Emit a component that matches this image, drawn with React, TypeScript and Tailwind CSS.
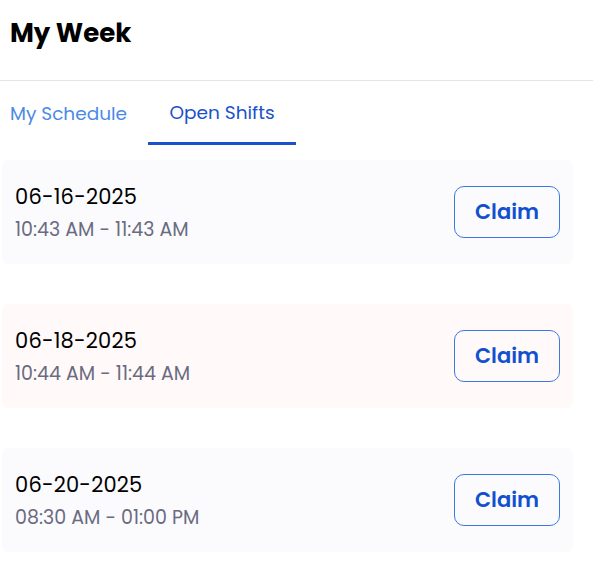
import React from "react";

type Shift = {
  date: string;
  time: string;
  tint: string;
};

const shifts: Shift[] = [
  { date: "06-16-2025", time: "10:43 AM - 11:43 AM", tint: "bg-[#fbfbfe]" },
  { date: "06-18-2025", time: "10:44 AM - 11:44 AM", tint: "bg-[#fffaf9]" },
  { date: "06-20-2025", time: "08:30 AM - 01:00 PM", tint: "bg-[#fbfbfe]" },
];

function ShiftCard({ shift }: { shift: Shift }) {
  return (
    <div className={`flex h-[104px] items-center justify-between rounded-md pl-[13px] pr-[13px] ${shift.tint}`}>
      <div className="flex flex-col">
        <span className="text-[21px] leading-[28px] tracking-[0.2px] text-black">{shift.date}</span>
        <span className="mt-[7px] text-[19px] leading-[24px] text-[#6b6b80]">{shift.time}</span>
      </div>
      <button className="h-[52px] w-[106px] rounded-[10px] border-[1.5px] border-[#3b7ae0] text-[21px] font-semibold text-[#1250d0]">
        Claim
      </button>
    </div>
  );
}

export default function App() {
  return (
    <div className="min-h-[575px] w-[593px] bg-white font-['Poppins','Inter',sans-serif]">
      <div className="flex h-[81px] items-start border-b border-[#e6e6e6] px-[10px] pt-[15px]">
        <h1 className="text-[26px] font-bold leading-[36px] text-black">My Week</h1>
      </div>

      <div className="flex h-[64px] items-stretch pl-[10px]">
        <div className="flex items-center pt-[1px] text-[18.5px] text-[#4a8ae6]">My Schedule</div>
        <div className="ml-[21px] flex w-[148px] items-center justify-center border-b-[3px] border-[#1a52cc] pt-[2px] text-[18.5px] text-[#1a52cc]">
          Open Shifts
        </div>
      </div>

      <div className="flex flex-col gap-[40px] pl-[2px] pr-[20px] pt-[15px]">
        {shifts.map((s) => (
          <ShiftCard key={s.date} shift={s} />
        ))}
      </div>
    </div>
  );
}
